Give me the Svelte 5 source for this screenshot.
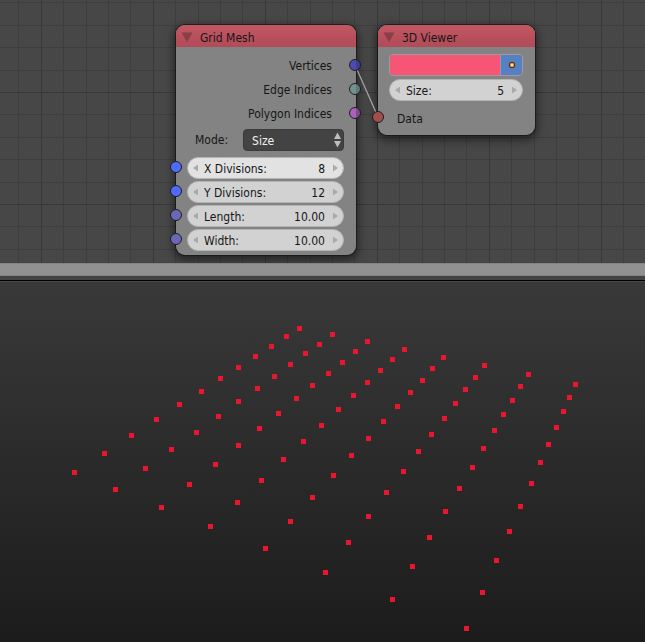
<script>
  let outputs = [
    { name: 'Vertices', left: '#4c4cae', right: '#3f3f90' },
    { name: 'Edge Indices', left: '#74908f', right: '#5b7a7a' },
    { name: 'Polygon Indices', left: '#a963bb', right: '#7f4a8a' }
  ];

  let fields = $state([
    { id: 'xdiv', name: 'X Divisions:', value: '8', socket: '#4d6bff', active: true },
    { id: 'ydiv', name: 'Y Divisions:', value: '12', socket: '#4d6bff', active: false },
    { id: 'length', name: 'Length:', value: '10.00', socket: '#6a68b4', active: false },
    { id: 'width', name: 'Width:', value: '10.00', socket: '#6a68b4', active: false }
  ]);

  let size = $state('5');
  let color = $state('#f75576');

  // Projected grid vertices: one list per X division, far edge first.
  const vertices = [
    [[299,46],[286,54],[271,64],[255,74],[238,85],[220,96],[201,109],[179,122],[156,137],[131,153],[104,171],[74,190]],
    [[332,52],[319,62],[305,71],[290,82],[274,94],[257,106],[238,119],[218,134],[196,150],[171,167],[145,186],[115,207]],
    [[367,59],[355,69],[342,80],[328,91],[312,103],[296,116],[278,131],[259,146],[238,163],[215,182],[189,202],[161,225]],
    [[404,67],[392,77],[380,88],[367,100],[353,113],[338,127],[321,143],[303,159],[283,177],[261,198],[237,220],[210,244]],
    [[443,75],[432,86],[422,98],[410,110],[397,124],[383,139],[368,156],[351,173],[333,193],[312,215],[290,239],[265,266]],
    [[484,83],[475,95],[465,107],[455,121],[444,136],[431,152],[418,169],[403,189],[386,210],[368,234],[348,260],[325,290]],
    [[528,92],[520,104],[512,118],[503,132],[494,148],[483,166],[472,185],[459,206],[445,229],[429,255],[412,284],[392,317]],
    [[575,102],[569,115],[563,129],[556,145],[548,162],[540,180],[531,201],[520,224],[509,249],[496,278],[482,310],[466,346]]
  ].flat();
</script>

{#snippet arrow(dir)}
  <svg class="arrow" width="5" height="8" viewBox="0 0 5 8" aria-hidden="true">
    <path d={dir === 'left' ? 'M5 0.5V7.5L0 4Z' : 'M0 0.5V7.5L5 4Z'} />
  </svg>
{/snippet}

<main>
  <section class="editor" aria-label="Node editor">
    <svg class="link" aria-hidden="true">
      <line x1="355" y1="65" x2="378" y2="117" />
    </svg>

    <article class="node grid-node">
      <header>
        <button class="collapse" aria-label="Collapse Grid Mesh">
          <svg width="12" height="11" viewBox="0 0 12 11"><path d="M0.5 0.5H11.5L6 10.5Z" /></svg>
        </button>
        <h2>Grid Mesh</h2>
      </header>
      <div class="body">
        <ul class="outputs">
          {#each outputs as o}
            <li>
              {o.name}
              <i class="socket out" style="background: linear-gradient(90deg, {o.left} 58%, {o.right} 58%)"></i>
            </li>
          {/each}
        </ul>
        <div class="mode">
          <label for="mode">Mode:</label>
          <div class="select">
            <select id="mode">
              <option>Size</option>
              <option>Number</option>
            </select>
            <svg width="7" height="16" viewBox="0 0 7 16" aria-hidden="true">
              <path d="M0 7H7L3.5 0.5ZM0 9H7L3.5 15.5Z" />
            </svg>
          </div>
        </div>
        <div class="fields">
          {#each fields as f}
            <div class="field" class:active={f.active}>
              <i class="socket in" style="background: {f.socket}"></i>
              {@render arrow('left')}
              <label for={f.id}>{f.name}</label>
              <input id={f.id} type="text" bind:value={f.value} />
              {@render arrow('right')}
            </div>
          {/each}
        </div>
      </div>
    </article>

    <article class="node viewer-node">
      <header>
        <button class="collapse" aria-label="Collapse 3D Viewer">
          <svg width="12" height="11" viewBox="0 0 12 11"><path d="M0.5 0.5H11.5L6 10.5Z" /></svg>
        </button>
        <h2>3D Viewer</h2>
      </header>
      <div class="body">
        <div class="swatch">
          <input type="color" aria-label="Vertex color" bind:value={color} />
          <button aria-label="Show vertices">
            <svg width="8" height="8" viewBox="0 0 8 8">
              <rect x="1" y="1" width="6" height="6" rx="2" fill="#4a3018" />
              <rect x="2" y="2" width="4" height="4" rx="1" fill="#e8962f" />
              <rect x="3" y="3" width="2" height="2" fill="#ffe8b0" />
            </svg>
          </button>
        </div>
        <div class="field">
          {@render arrow('left')}
          <label for="size">Size:</label>
          <input id="size" type="text" bind:value={size} />
          {@render arrow('right')}
        </div>
        <div class="data">
          <i class="socket in" style="background: #a04e4e"></i>
          Data
        </div>
      </div>
    </article>
  </section>

  <div class="bar"></div>
  <div class="gap"></div>

  <section class="viewport" aria-label="3D view">
    <svg aria-hidden="true">
      {#each vertices as [x, y]}
        <rect x={x - 2} y={y - 2} width="5" height="5" />
      {/each}
    </svg>
  </section>
</main>

<style>
  :global(body) {
    background: #1c1c1c;
  }

  main {
    display: flex;
    flex-direction: column;
    min-height: 100vh;
    font: 12px/24px "DejaVu Sans Condensed", "DejaVu Sans", sans-serif;
    color: #161616;
  }

  .editor {
    position: relative;
    height: 263px;
    overflow: hidden;
    background-color: #474747;
    background-image:
      linear-gradient(90deg, #383838 1px, transparent 1px),
      linear-gradient(#383838 1px, transparent 1px),
      linear-gradient(90deg, transparent 22px, #3e3e3e 22px 23px, transparent 23px 45px, #3e3e3e 45px 46px, transparent 46px 67px, #3e3e3e 67px 68px, transparent 68px 89px, #3e3e3e 89px 90px, transparent 90px),
      linear-gradient(transparent 22px, #3e3e3e 22px 23px, transparent 23px 45px, #3e3e3e 45px 46px, transparent 46px 67px, #3e3e3e 67px 68px, transparent 68px 90px, #3e3e3e 90px 91px, transparent 91px);
    background-size: 112px 112px;
    background-position: 41px 92px;
  }

  .link {
    position: absolute;
    inset: 0;
    width: 100%;
    height: 100%;
    z-index: 2;
    pointer-events: none;
  }

  .link line {
    stroke: #a6a6a6;
    stroke-width: 1.2;
  }

  .node {
    position: absolute;
    top: 25px;
    box-sizing: border-box;
    border-radius: 9px;
    background: rgba(136, 136, 136, 0.93);
    box-shadow: 0 0 0 1px rgba(20, 20, 20, 0.7), 0 3px 9px 2px rgba(0, 0, 0, 0.5);
  }

  .grid-node {
    left: 176px;
    width: 180px;
  }

  .viewer-node {
    left: 378px;
    width: 157px;
  }

  header {
    display: flex;
    align-items: center;
    gap: 7px;
    height: 22px;
    padding-left: 5px;
    border-radius: 9px 9px 0 0;
    background: linear-gradient(#c25763, #b04b57);
  }

  h2 {
    margin: 0;
    padding-top: 4px;
    font: inherit;
  }

  button {
    display: flex;
    align-items: center;
    justify-content: center;
    margin: 0;
    padding: 0;
    border: 0;
    background: none;
  }

  .collapse {
    padding-top: 3px;
  }

  .collapse path {
    fill: #8a3f48;
  }

  .body {
    display: flex;
    flex-direction: column;
    padding: 7px 12px 4px 11px;
  }

  .viewer-node .body {
    gap: 3px;
  }

  .outputs {
    margin: 0;
    padding: 0 12px 0 0;
    list-style: none;
    text-align: right;
  }

  .outputs li {
    position: relative;
  }

  .socket {
    position: absolute;
    top: 50%;
    z-index: 3;
    box-sizing: border-box;
    width: 12px;
    height: 12px;
    margin-top: -7px;
    border: 1px solid #1d1d24;
    border-radius: 50%;
  }

  .socket.in {
    left: -18px;
  }

  .socket.out {
    right: -29px;
  }

  .mode {
    display: flex;
    align-items: center;
    gap: 15px;
    height: 28px;
    padding-left: 8px;
  }

  .select {
    position: relative;
    flex: 1;
    display: flex;
  }

  .select select {
    appearance: none;
    width: 100%;
    height: 22px;
    padding: 1px 8px 0;
    border: 1px solid #3a3a3a;
    border-radius: 4px;
    background: #434343;
    color: #f0f0f0;
    font: inherit;
    line-height: 20px;
  }

  .select svg {
    position: absolute;
    right: 3px;
    top: 3px;
    fill: #bdbdbd;
    pointer-events: none;
  }

  .fields {
    display: flex;
    flex-direction: column;
    gap: 2px;
    padding-top: 3px;
  }

  .field {
    position: relative;
    display: flex;
    align-items: center;
    box-sizing: border-box;
    height: 22px;
    padding: 0 5px;
    border: 1px solid #b4b4b4;
    border-radius: 11px;
    background: #d2d2d2;
  }

  .field.active {
    background: #e2e2e2;
  }

  .field label {
    padding: 1px 0 0 6px;
    white-space: nowrap;
  }

  .field input {
    flex: 1;
    min-width: 0;
    height: 20px;
    padding: 1px 8px 0 0;
    border: 0;
    background: none;
    color: inherit;
    font: inherit;
    text-align: right;
  }

  .arrow {
    flex: none;
    fill: #a9a9a9;
  }

  .swatch {
    display: flex;
    box-sizing: border-box;
    height: 22px;
    border: 1px solid #a09aa0;
    border-radius: 4px;
    overflow: hidden;
  }

  .swatch input {
    appearance: none;
    flex: 1;
    min-width: 0;
    height: 20px;
    padding: 0;
    border: 0;
    background: none;
  }

  .swatch input::-webkit-color-swatch-wrapper {
    padding: 0;
  }

  .swatch input::-webkit-color-swatch {
    border: 0;
  }

  .swatch button {
    width: 22px;
    border-left: 1px solid #8f9cb5;
    background: #5680c2;
  }

  .data {
    position: relative;
    height: 24px;
    padding: 3px 0 0 8px;
  }

  .data .socket {
    left: -17px;
  }

  .bar {
    box-sizing: border-box;
    height: 13px;
    border: solid #838383;
    border-width: 1px 0;
    background: #919191;
  }

  .gap {
    height: 4px;
    border-bottom: 1px solid #000;
    background: #444;
  }

  .viewport {
    flex: 1;
    display: flex;
    min-height: 360px;
    border-top: 1px solid #484848;
    background: linear-gradient(#393939, #1c1c1c);
  }

  .viewport svg {
    width: 100%;
    height: 360px;
    overflow: visible;
  }

  .viewport rect {
    fill: #ea162e;
  }
</style>
